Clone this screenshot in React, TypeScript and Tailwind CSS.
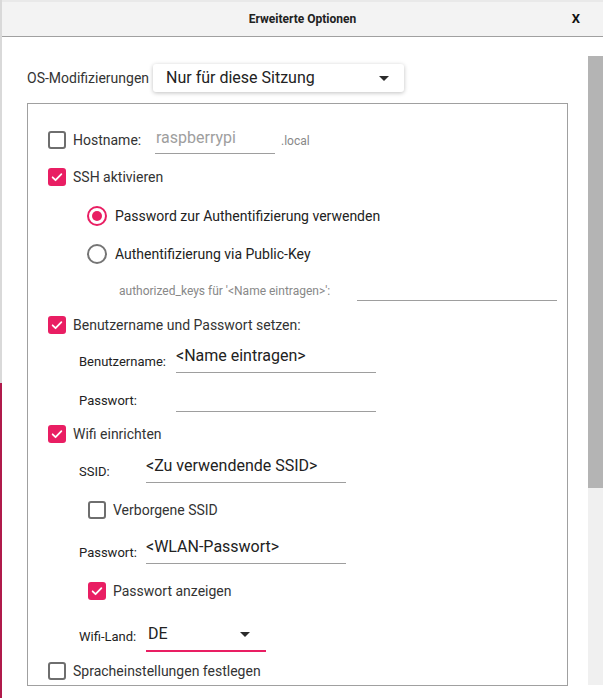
import React from "react";

const font = { fontFamily: "Roboto, 'Noto Sans', sans-serif" };

function Checkbox({ checked = false }: { checked?: boolean }) {
  if (checked) {
    return (
      <div className="w-[18px] h-[18px] rounded-[3px] bg-[#e91e63] flex items-center justify-center shrink-0">
        <svg width="14" height="14" viewBox="0 0 24 24" fill="none">
          <path d="M4.5 12.5l5 5L19.5 7" stroke="white" strokeWidth="3" strokeLinecap="round" strokeLinejoin="round" />
        </svg>
      </div>
    );
  }
  return <div className="w-[18px] h-[18px] rounded-[3px] border-2 border-[#6e6e6e] shrink-0" />;
}

function Radio({ checked = false }: { checked?: boolean }) {
  return (
    <div
      className={
        checked
          ? "w-[20px] h-[20px] rounded-full border-2 border-[#e91e63] flex items-center justify-center shrink-0"
          : "w-[20px] h-[20px] rounded-full border-2 border-[#757575] shrink-0"
      }
    >
      {checked && <div className="w-[10px] h-[10px] rounded-full bg-[#e91e63]" />}
    </div>
  );
}

function Caret({ className = "" }: { className?: string }) {
  return (
    <svg width="10" height="5" viewBox="0 0 10 5" className={className}>
      <path d="M0 0h10L5 5z" fill="#2b2b2b" />
    </svg>
  );
}

function CheckRow({ checked, label, className = "" }: { checked?: boolean; label: string; className?: string }) {
  return (
    <div className={"h-[20px] flex items-center " + className}>
      <Checkbox checked={checked} />
      <span className="ml-[7px] text-[14px] text-[#333]">{label}</span>
    </div>
  );
}

function FieldRow({
  label,
  value,
  labelW,
  inputW,
  className = "",
}: {
  label: string;
  value: string;
  labelW: string;
  inputW: string;
  className?: string;
}) {
  return (
    <div className={"h-[30px] flex pl-[51px] " + className}>
      <span className={"text-[13px] text-[#222] pt-[9px] " + labelW}>{label}</span>
      <div className={"h-[30px] border-b border-[#9e9e9e] text-[16px] text-[#222] leading-[20px] pt-[3px] " + inputW}>
        {value}
      </div>
    </div>
  );
}

export default function App() {
  return (
    <div className="w-[603px] h-[698px] flex bg-[#e9e9e9] overflow-hidden" style={font}>
      <div className="w-[2px] flex flex-col">
        <div className="h-[383px] bg-[#d9d9d9]" />
        <div className="flex-1 bg-[#b01a4b]" />
      </div>

      <div className="flex-1 flex flex-col pt-[2px]">
        <div className="h-[35px] bg-[#f3f3f3] border-b border-[#a0a0a0] flex items-center relative">
          <span className="flex-1 text-center text-[12px] font-bold text-[#222]">Erweiterte Optionen</span>
          <span className="absolute right-[23px] text-[13px] font-bold text-[#111]">X</span>
        </div>

        <div className="flex-1 flex bg-white">
          <div className="flex-1 pl-[25px] pr-[20px]">
            <div className="flex items-center mt-[27px] h-[28px]">
              <span className="text-[14px] text-[#333] w-[126px]">OS-Modifizierungen</span>
              <div className="w-[251px] h-[28px] bg-white rounded-[3px] shadow-[0_1px_4px_rgba(0,0,0,0.25)] flex items-center pl-[13px] pr-[15px]">
                <span className="flex-1 text-[16px] text-[#222]">Nur für diese Sitzung</span>
                <Caret />
              </div>
            </div>

            <div className="mt-[11px] border border-[#a0a0a0] h-[583px] pt-[21px]">
              {/* Hostname */}
              <div className="h-[30px] flex items-center pl-[20px]">
                <Checkbox />
                <span className="ml-[7px] text-[14px] text-[#333] w-[82px]">Hostname:</span>
                <div className="w-[120px] h-[29px] self-start border-b border-[#9e9e9e] text-[16px] text-[#9e9e9e] pl-[1px] pt-[1px]">
                  raspberrypi
                </div>
                <span className="ml-[6px] text-[12px] text-[#888] pt-[2px]">.local</span>
              </div>

              <CheckRow checked label="SSH aktivieren" className="mt-[12px] pl-[20px]" />

              <div className="h-[20px] flex items-center mt-[19px] pl-[59px]">
                <Radio checked />
                <span className="ml-[8px] text-[14px] text-[#222]">Password zur Authentifizierung verwenden</span>
              </div>
              <div className="h-[20px] flex items-center mt-[18px] pl-[59px]">
                <Radio />
                <span className="ml-[8px] text-[14px] text-[#222]">Authentifizierung via Public-Key</span>
              </div>

              <div className="h-[20px] flex items-center mt-[17px] pl-[91px]">
                <span className="text-[12px] text-[#888] w-[238px]">authorized_keys für '&lt;Name eintragen&gt;':</span>
                <div className="w-[200px] h-[20px] border-b border-[#9e9e9e]" />
              </div>

              <CheckRow checked label="Benutzername und Passwort setzen:" className="mt-[14px] pl-[20px]" />

              <FieldRow label="Benutzername:" value="<Name eintragen>" labelW="w-[97px]" inputW="w-[200px]" className="mt-[8px]" />
              <FieldRow label="Passwort:" value="" labelW="w-[97px]" inputW="w-[200px]" className="mt-[9px]" />

              <CheckRow checked label="Wifi einrichten" className="mt-[12px] pl-[20px]" />

              <FieldRow label="SSID:" value="<Zu verwendende SSID>" labelW="w-[67px]" inputW="w-[200px]" className="mt-[9px]" />

              <CheckRow label="Verborgene SSID" className="mt-[17px] pl-[60px]" />

              <FieldRow label="Passwort:" value="<WLAN-Passwort>" labelW="w-[67px]" inputW="w-[200px]" className="mt-[14px]" />

              <CheckRow checked label="Passwort anzeigen" className="mt-[17px] pl-[60px]" />

              <div className="h-[32px] flex mt-[19px] pl-[51px]">
                <span className="text-[13px] text-[#222] w-[67px] pt-[7px]">Wifi-Land:</span>
                <div className="w-[120px] h-[32px] border-b-2 border-[#e91e63] flex items-center pl-[2px] pr-[16px] pb-[2px]">
                  <span className="flex-1 text-[16px] text-[#222]">DE</span>
                  <Caret />
                </div>
              </div>

              <CheckRow label="Spracheinstellungen festlegen" className="mt-[9px] pl-[20px]" />
            </div>
          </div>

          <div className="w-[15px] flex flex-col pt-[19px]">
            <div className="h-[432px] bg-[#b4b4b4]" />
            <div className="h-[197px] bg-[#f0f0f0]" />
          </div>
        </div>
      </div>
    </div>
  );
}
